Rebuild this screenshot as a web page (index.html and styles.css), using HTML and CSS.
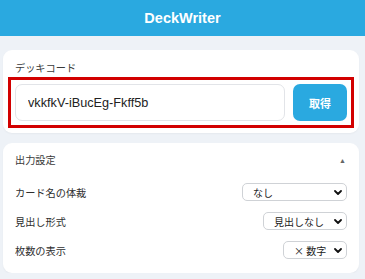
FILE: index.html
```html
<!DOCTYPE html>
<html>
<head>
    <meta charset="UTF-8">
    <meta name="viewport" content="width=device-width, initial-scale=1.0">
    <title>DeckWriter</title>
    <link rel="stylesheet" href="styles.css">
</head>
<body>
<header class="app-header">DeckWriter</header>
<main class="content">
    <section class="card code-card">
        <div class="field-label">デッキコード</div>
        <div class="input-group">
            <input class="code-input" type="text" value="vkkfkV-iBucEg-Fkff5b">
            <button class="fetch-button">取得</button>
        </div>
    </section>
    <section class="card settings-card">
        <div class="settings-head">
            <span>出力設定</span>
            <span class="toggle">▲</span>
        </div>
        <div class="settings-list">
            <div class="setting-row">
                <span>カード名の体裁</span>
                <span class="select-wrap wide">
                    <select class="select"><option>なし</option></select>
                    <svg class="chevron" viewBox="0 0 8 5" width="8" height="5"><path d="M1 1 L4 4 L7 1" fill="none" stroke="#111" stroke-width="1.8" stroke-linecap="round" stroke-linejoin="round"/></svg>
                </span>
            </div>
            <div class="setting-row">
                <span>見出し形式</span>
                <span class="select-wrap mid">
                    <select class="select"><option>見出しなし</option></select>
                    <svg class="chevron" viewBox="0 0 8 5" width="8" height="5"><path d="M1 1 L4 4 L7 1" fill="none" stroke="#111" stroke-width="1.8" stroke-linecap="round" stroke-linejoin="round"/></svg>
                </span>
            </div>
            <div class="setting-row">
                <span>枚数の表示</span>
                <span class="select-wrap narrow">
                    <select class="select"><option>× 数字</option></select>
                    <svg class="chevron" viewBox="0 0 8 5" width="8" height="5"><path d="M1 1 L4 4 L7 1" fill="none" stroke="#111" stroke-width="1.8" stroke-linecap="round" stroke-linejoin="round"/></svg>
                </span>
            </div>
        </div>
    </section>
</main>
</body>
</html>
```

FILE: styles.css
```css
html, body {
    margin: 0;
    padding: 0;
    background-color: #eef2f7;
    color: #333;
    font-family: "Liberation Sans", "Noto Sans CJK JP", sans-serif;
}

.app-header {
    height: 36px;
    line-height: 36px;
    background-color: #2aa9e0;
    color: #fff;
    font-size: 14.5px;
    font-weight: bold;
    text-align: center;
}

.content {
    display: flex;
    flex-direction: column;
    gap: 10px;
    padding: 14px 6px 0 3px;
}

.card {
    background-color: #fff;
    border-radius: 9px;
    box-shadow: 0 1px 2px rgba(0, 0, 0, 0.04);
}

/* デッキコード */
.code-card {
    padding: 12px;
}

.field-label {
    font-size: 10.2px;
    line-height: 13px;
    color: #3a3a3a;
    margin-bottom: 9px;
}

.input-group {
    display: flex;
    gap: 8px;
    height: 37px;
    outline: 3px solid #d20000;
    outline-offset: 4px;
}

.code-input {
    flex: 1;
    min-width: 0;
    box-sizing: border-box;
    height: 37px;
    padding: 0 12px;
    border: 1px solid #e2e4e8;
    border-radius: 7px;
    font-family: "Liberation Sans", sans-serif;
    font-size: 12.7px;
    color: #222;
}

.fetch-button {
    width: 54px;
    height: 37px;
    border: none;
    border-radius: 7px;
    background-color: #2aa9e0;
    color: #fff;
    font-family: "Noto Sans CJK JP", sans-serif;
    font-size: 11px;
    font-weight: bold;
    cursor: pointer;
}

/* 出力設定 */
.settings-card {
    padding: 11px 12px 14px;
}

.settings-head {
    display: flex;
    justify-content: space-between;
    align-items: center;
    font-size: 10.2px;
    line-height: 13px;
    color: #3a3a3a;
    margin-bottom: 16px;
}

.toggle {
    font-size: 7px;
    color: #666;
    margin-right: 1px;
}

.settings-list {
    display: flex;
    flex-direction: column;
    gap: 11px;
}

.setting-row {
    display: flex;
    justify-content: space-between;
    align-items: center;
    height: 18px;
    font-size: 10.2px;
    color: #2e2e2e;
}

.select-wrap {
    position: relative;
    display: block;
    height: 18px;
}

.select-wrap.wide { width: 105px; }
.select-wrap.mid { width: 84px; }
.select-wrap.narrow { width: 64px; }

.select {
    -webkit-appearance: none;
    appearance: none;
    box-sizing: border-box;
    width: 100%;
    height: 18px;
    padding: 0 0 0 10px;
    border: 1px solid #cfd2d6;
    border-radius: 5px;
    background-color: #fff;
    font-family: "Noto Sans CJK JP", sans-serif;
    font-size: 10px;
    color: #222;
}

.chevron {
    position: absolute;
    right: 5px;
    top: 7px;
    pointer-events: none;
}
```
